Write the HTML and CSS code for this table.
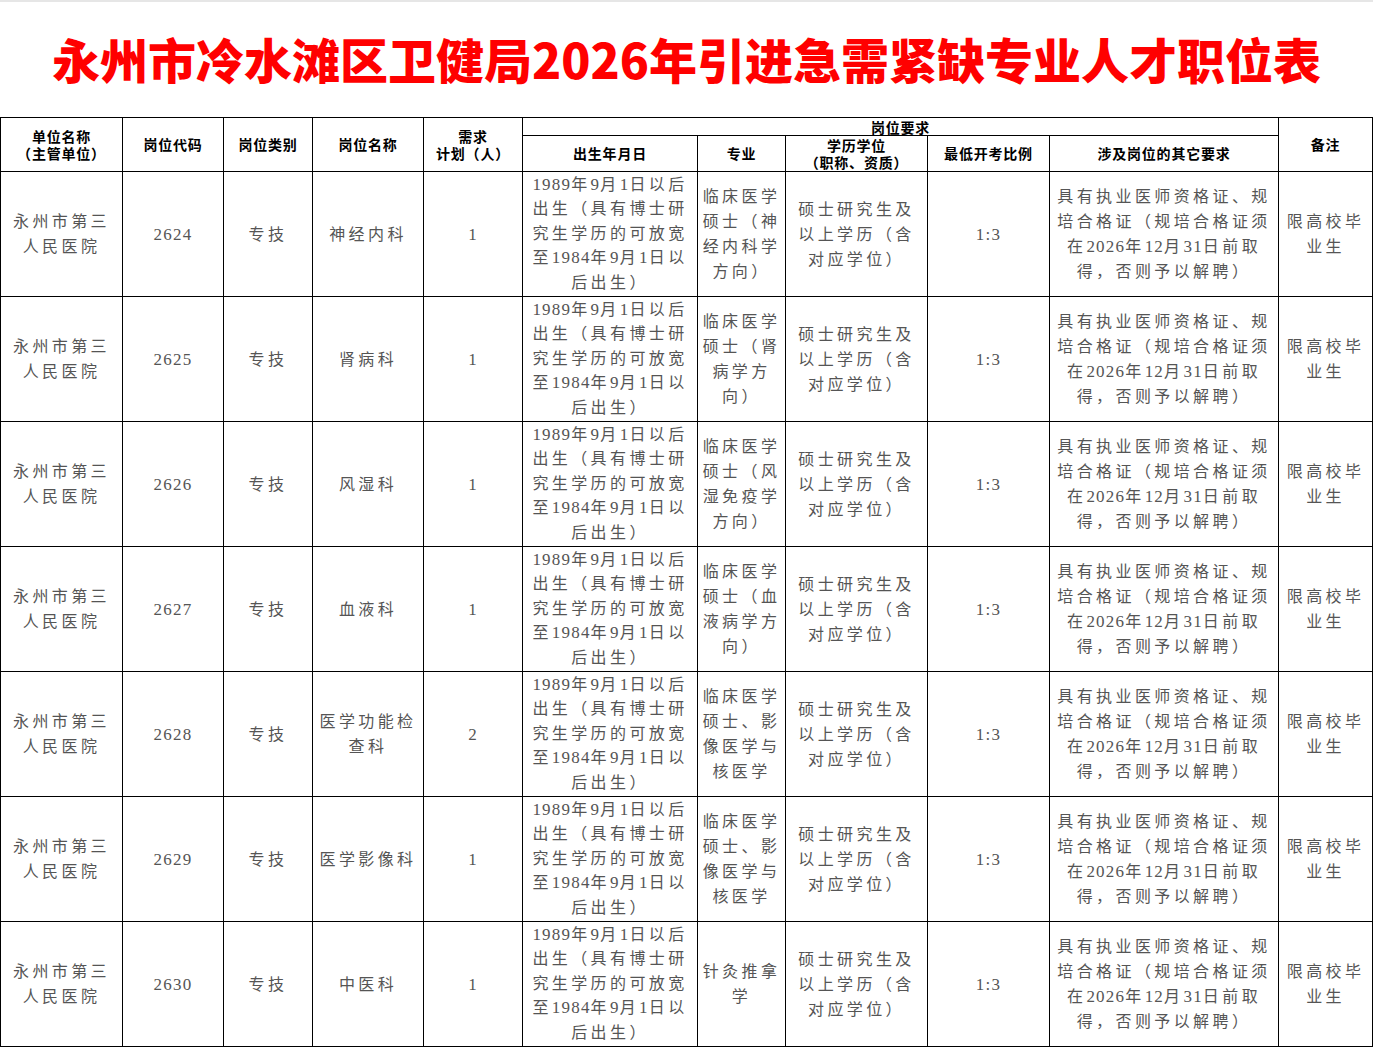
FILE: index.html
```html
<!DOCTYPE html>
<html lang="zh-CN">
<head>
<meta charset="utf-8">
<title>永州市冷水滩区卫健局2026年引进急需紧缺专业人才职位表</title>
<link rel="stylesheet" href="styles.css">
</head>
<body>
<div class="title">永州市冷水滩区卫健局2026年引进急需紧缺专业人才职位表</div>
<table class="grid">
  <colgroup>
    <col class="c1"><col class="c2"><col class="c3"><col class="c4"><col class="c5"><col class="c6"><col class="c7"><col class="c8"><col class="c9"><col class="c10"><col class="c11">
  </colgroup>
  <thead>
    <tr class="h1">
      <th rowspan="2"><div>单位名称</div><div>（主管单位）</div></th>
      <th rowspan="2">岗位代码</th>
      <th rowspan="2">岗位类别</th>
      <th rowspan="2">岗位名称</th>
      <th rowspan="2"><div>需求</div><div>计划（人）</div></th>
      <th colspan="5" class="group">岗位要求</th>
      <th rowspan="2">备注</th>
    </tr>
    <tr class="h2">
      <th>出生年月日</th>
      <th>专业</th>
      <th><div>学历学位</div><div>（职称、资质）</div></th>
      <th>最低开考比例</th>
      <th>涉及岗位的其它要求</th>
    </tr>
  </thead>
  <tbody>
    <tr class="row">
      <td><div>永州市第三</div><div>人民医院</div></td>
      <td><span class="d">2624</span></td>
      <td>专技</td>
      <td>神经内科</td>
      <td><span class="d">1</span></td>
      <td class="birth"><div><span class="d">1989</span>年<span class="d">9</span>月<span class="d">1</span>日以后</div><div>出生（具有博士研</div><div>究生学历的可放宽</div><div>至<span class="d">1984</span>年<span class="d">9</span>月<span class="d">1</span>日以</div><div>后出生）</div></td>
      <td><div>临床医学</div><div>硕士（神</div><div>经内科学</div><div>方向）</div></td>
      <td><div>硕士研究生及</div><div>以上学历（含</div><div>对应学位）</div></td>
      <td><span class="d">1:3</span></td>
      <td><div>具有执业医师资格证、规</div><div>培合格证（规培合格证须</div><div>在<span class="d">2026</span>年<span class="d">12</span>月<span class="d">31</span>日前取</div><div>得，否则予以解聘）</div></td>
      <td><div>限高校毕</div><div>业生</div></td>
    </tr>
    <tr class="row">
      <td><div>永州市第三</div><div>人民医院</div></td>
      <td><span class="d">2625</span></td>
      <td>专技</td>
      <td>肾病科</td>
      <td><span class="d">1</span></td>
      <td class="birth"><div><span class="d">1989</span>年<span class="d">9</span>月<span class="d">1</span>日以后</div><div>出生（具有博士研</div><div>究生学历的可放宽</div><div>至<span class="d">1984</span>年<span class="d">9</span>月<span class="d">1</span>日以</div><div>后出生）</div></td>
      <td><div>临床医学</div><div>硕士（肾</div><div>病学方</div><div>向）</div></td>
      <td><div>硕士研究生及</div><div>以上学历（含</div><div>对应学位）</div></td>
      <td><span class="d">1:3</span></td>
      <td><div>具有执业医师资格证、规</div><div>培合格证（规培合格证须</div><div>在<span class="d">2026</span>年<span class="d">12</span>月<span class="d">31</span>日前取</div><div>得，否则予以解聘）</div></td>
      <td><div>限高校毕</div><div>业生</div></td>
    </tr>
    <tr class="row">
      <td><div>永州市第三</div><div>人民医院</div></td>
      <td><span class="d">2626</span></td>
      <td>专技</td>
      <td>风湿科</td>
      <td><span class="d">1</span></td>
      <td class="birth"><div><span class="d">1989</span>年<span class="d">9</span>月<span class="d">1</span>日以后</div><div>出生（具有博士研</div><div>究生学历的可放宽</div><div>至<span class="d">1984</span>年<span class="d">9</span>月<span class="d">1</span>日以</div><div>后出生）</div></td>
      <td><div>临床医学</div><div>硕士（风</div><div>湿免疫学</div><div>方向）</div></td>
      <td><div>硕士研究生及</div><div>以上学历（含</div><div>对应学位）</div></td>
      <td><span class="d">1:3</span></td>
      <td><div>具有执业医师资格证、规</div><div>培合格证（规培合格证须</div><div>在<span class="d">2026</span>年<span class="d">12</span>月<span class="d">31</span>日前取</div><div>得，否则予以解聘）</div></td>
      <td><div>限高校毕</div><div>业生</div></td>
    </tr>
    <tr class="row">
      <td><div>永州市第三</div><div>人民医院</div></td>
      <td><span class="d">2627</span></td>
      <td>专技</td>
      <td>血液科</td>
      <td><span class="d">1</span></td>
      <td class="birth"><div><span class="d">1989</span>年<span class="d">9</span>月<span class="d">1</span>日以后</div><div>出生（具有博士研</div><div>究生学历的可放宽</div><div>至<span class="d">1984</span>年<span class="d">9</span>月<span class="d">1</span>日以</div><div>后出生）</div></td>
      <td><div>临床医学</div><div>硕士（血</div><div>液病学方</div><div>向）</div></td>
      <td><div>硕士研究生及</div><div>以上学历（含</div><div>对应学位）</div></td>
      <td><span class="d">1:3</span></td>
      <td><div>具有执业医师资格证、规</div><div>培合格证（规培合格证须</div><div>在<span class="d">2026</span>年<span class="d">12</span>月<span class="d">31</span>日前取</div><div>得，否则予以解聘）</div></td>
      <td><div>限高校毕</div><div>业生</div></td>
    </tr>
    <tr class="row">
      <td><div>永州市第三</div><div>人民医院</div></td>
      <td><span class="d">2628</span></td>
      <td>专技</td>
      <td><div>医学功能检</div><div>查科</div></td>
      <td><span class="d">2</span></td>
      <td class="birth"><div><span class="d">1989</span>年<span class="d">9</span>月<span class="d">1</span>日以后</div><div>出生（具有博士研</div><div>究生学历的可放宽</div><div>至<span class="d">1984</span>年<span class="d">9</span>月<span class="d">1</span>日以</div><div>后出生）</div></td>
      <td><div>临床医学</div><div>硕士、影</div><div>像医学与</div><div>核医学</div></td>
      <td><div>硕士研究生及</div><div>以上学历（含</div><div>对应学位）</div></td>
      <td><span class="d">1:3</span></td>
      <td><div>具有执业医师资格证、规</div><div>培合格证（规培合格证须</div><div>在<span class="d">2026</span>年<span class="d">12</span>月<span class="d">31</span>日前取</div><div>得，否则予以解聘）</div></td>
      <td><div>限高校毕</div><div>业生</div></td>
    </tr>
    <tr class="row">
      <td><div>永州市第三</div><div>人民医院</div></td>
      <td><span class="d">2629</span></td>
      <td>专技</td>
      <td>医学影像科</td>
      <td><span class="d">1</span></td>
      <td class="birth"><div><span class="d">1989</span>年<span class="d">9</span>月<span class="d">1</span>日以后</div><div>出生（具有博士研</div><div>究生学历的可放宽</div><div>至<span class="d">1984</span>年<span class="d">9</span>月<span class="d">1</span>日以</div><div>后出生）</div></td>
      <td><div>临床医学</div><div>硕士、影</div><div>像医学与</div><div>核医学</div></td>
      <td><div>硕士研究生及</div><div>以上学历（含</div><div>对应学位）</div></td>
      <td><span class="d">1:3</span></td>
      <td><div>具有执业医师资格证、规</div><div>培合格证（规培合格证须</div><div>在<span class="d">2026</span>年<span class="d">12</span>月<span class="d">31</span>日前取</div><div>得，否则予以解聘）</div></td>
      <td><div>限高校毕</div><div>业生</div></td>
    </tr>
    <tr class="row">
      <td><div>永州市第三</div><div>人民医院</div></td>
      <td><span class="d">2630</span></td>
      <td>专技</td>
      <td>中医科</td>
      <td><span class="d">1</span></td>
      <td class="birth"><div><span class="d">1989</span>年<span class="d">9</span>月<span class="d">1</span>日以后</div><div>出生（具有博士研</div><div>究生学历的可放宽</div><div>至<span class="d">1984</span>年<span class="d">9</span>月<span class="d">1</span>日以</div><div>后出生）</div></td>
      <td><div>针灸推拿</div><div>学</div></td>
      <td><div>硕士研究生及</div><div>以上学历（含</div><div>对应学位）</div></td>
      <td><span class="d">1:3</span></td>
      <td><div>具有执业医师资格证、规</div><div>培合格证（规培合格证须</div><div>在<span class="d">2026</span>年<span class="d">12</span>月<span class="d">31</span>日前取</div><div>得，否则予以解聘）</div></td>
      <td><div>限高校毕</div><div>业生</div></td>
    </tr>
  </tbody>
</table>
</body>
</html>
```
FILE: styles.css
```css
html, body {
  margin: 0;
  padding: 0;
  background: #ffffff;
}

body {
  font-family: "Liberation Serif", "Noto Sans CJK SC", serif;
  color: #555555;
}

.title {
  box-sizing: border-box;
  height: 117px;
  border-top: 2px solid #e6e6e6;
  display: flex;
  align-items: center;
  justify-content: center;
  padding-bottom: 4px;
  font-family: "Noto Sans CJK SC", sans-serif;
  font-weight: 900;
  font-size: 48px;
  color: #ff0000;
  white-space: nowrap;
}

.grid {
  border-collapse: collapse;
  table-layout: fixed;
  width: 1372px;
}

.c1 { width: 122px; }
.c2 { width: 101px; }
.c3 { width: 89px; }
.c4 { width: 111px; }
.c5 { width: 99px; }
.c6 { width: 175px; }
.c7 { width: 88px; }
.c8 { width: 142px; }
.c9 { width: 122px; }
.c10 { width: 229px; }
.c11 { width: 94px; }

.grid th,
.grid td {
  border: 1px solid #000000;
  padding: 0;
  text-align: center;
  vertical-align: middle;
  overflow: hidden;
}

.grid th {
  font-family: "Noto Sans CJK SC", sans-serif;
  font-weight: 700;
  font-size: 14px;
  line-height: 17px;
  color: #000000;
  letter-spacing: 0.8px;
}

.h1 { height: 18px; }
.h2 { height: 36px; }

.grid th.group {
  line-height: 16px;
}

.row { height: 125px; }

.grid td {
  font-size: 16px;
  line-height: 25px;
  letter-spacing: 3.4px;
  white-space: nowrap;
  color: #555555;
}

.grid td.birth {
  line-height: 24.4px;
}

.grid td > div {
  white-space: nowrap;
}

.d {
  font-family: "Liberation Serif", serif;
  font-size: 17px;
  letter-spacing: 1.2px;
}
```
